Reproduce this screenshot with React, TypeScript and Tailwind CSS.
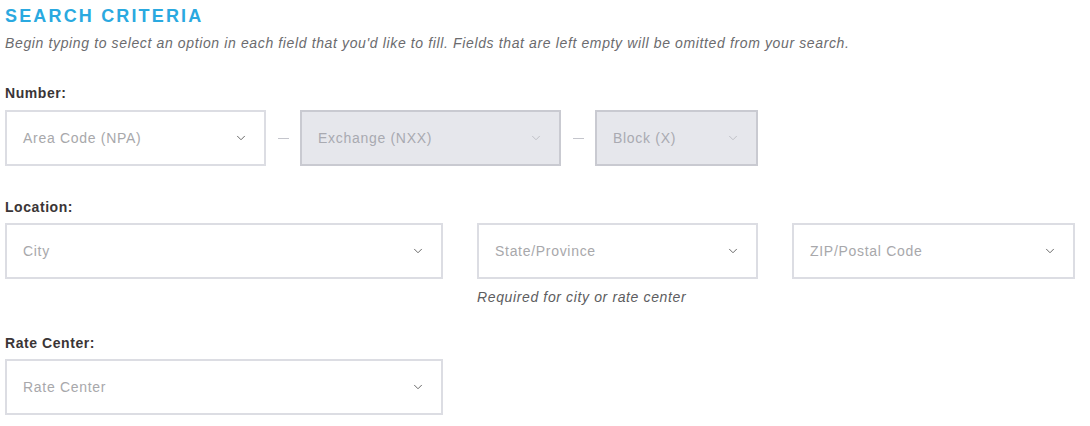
import { ChevronDown } from "lucide-react";

interface SelectBoxProps {
    placeholder: string;
    width: string;
    disabled?: boolean;
}

function SelectBox({ placeholder, width, disabled }: SelectBoxProps) {
    const tone = disabled
        ? "bg-[#e6e7ec] border-[#c9cad1] text-[#a9aab1]"
        : "bg-white border-[#dcdde3] text-[#a8a8ab]";
    return (
        <div className={`${width} h-[56px] border-2 ${tone} flex items-center justify-between pl-[16px] pr-[16px]`}>
            <span className="text-[14px] tracking-[0.05em]">{placeholder}</span>
            <ChevronDown
                size={14}
                strokeWidth={1.5}
                className={disabled ? "text-[#b9bac0]" : "text-[#555]"}
            />
        </div>
    );
}

function Dash() {
    return (
        <div className="w-[34px] flex items-center justify-center">
            <div className="w-[11px] h-px bg-[#c4c5cc]" />
        </div>
    );
}

const labelClass = "block text-[14px] leading-[16px] font-bold tracking-[0.04em] text-[#3a3536]";

export default function App() {
    return (
        <div className="w-[1090px] h-[426px] bg-white px-[5px] pt-[5px] font-['Liberation_Sans',Arial,sans-serif]">
            {/* Header */}
            <h1 className="text-[#2aa9e0] font-bold text-[18px] leading-[22px] tracking-[0.12em]">
                SEARCH CRITERIA
            </h1>
            <p className="italic text-[#6b6b6e] text-[14px] leading-[18px] tracking-[0.045em] mt-[7px]">
                Begin typing to select an option in each field that you'd like to fill. Fields that are left empty will be omitted from your search.
            </p>

            {/* Number */}
            <label className={`${labelClass} mt-[33px]`}>Number:</label>
            <div className="flex mt-[9px]">
                <SelectBox placeholder="Area Code (NPA)" width="w-[261px]" />
                <Dash />
                <SelectBox placeholder="Exchange (NXX)" width="w-[261px]" disabled />
                <Dash />
                <SelectBox placeholder="Block (X)" width="w-[163px]" disabled />
            </div>

            {/* Location */}
            <label className={`${labelClass} mt-[33px]`}>Location:</label>
            <div className="flex mt-[8px] gap-[34px]">
                <SelectBox placeholder="City" width="w-[438px]" />
                <div>
                    <SelectBox placeholder="State/Province" width="w-[281px]" />
                    <p className="italic text-[14px] leading-[16px] tracking-[0.045em] text-[#5d5d60] mt-[10px]">Required for city or rate center</p>
                </div>
                <SelectBox placeholder="ZIP/Postal Code" width="w-[283px]" />
            </div>

            {/* Rate Center */}
            <label className={`${labelClass} mt-[30px]`}>Rate Center:</label>
            <div className="flex mt-[8px]">
                <SelectBox placeholder="Rate Center" width="w-[438px]" />
            </div>
        </div>
    );
}
